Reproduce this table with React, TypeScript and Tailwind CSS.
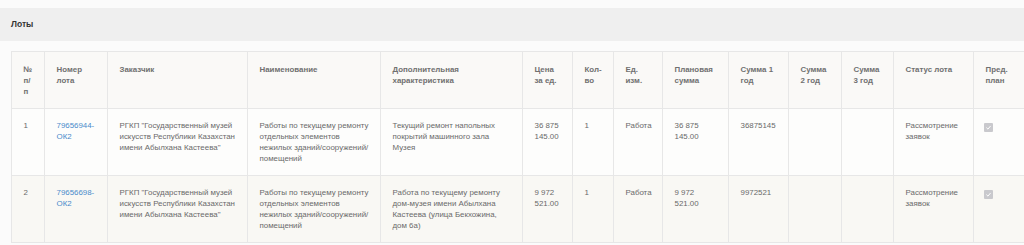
import React from "react";

const cols = [33, 63, 140, 133, 142, 50, 41, 49, 66, 60, 53, 52, 80, 60];

const headers = [
  "№ п/ п",
  "Номер лота",
  "Заказчик",
  "Наименование",
  "Дополнительная характеристика",
  "Цена за ед.",
  "Кол-во",
  "Ед. изм.",
  "Плановая сумма",
  "Сумма 1 год",
  "Сумма 2 год",
  "Сумма 3 год",
  "Статус лота",
  "Пред. план",
];

const rows = [
  {
    n: "1",
    lot: "79656944-ОК2",
    customer: 'РГКП "Государственный музей искусств Республики Казахстан имени Абылхана Кастеева"',
    name: "Работы по текущему ремонту отдельных элементов нежилых зданий/сооружений/ помещений",
    extra: "Текущий ремонт напольных покрытий машинного зала Музея",
    price: "36 875 145.00",
    qty: "1",
    unit: "Работа",
    plan: "36 875 145.00",
    s1: "36875145",
    status: "Рассмотрение заявок",
  },
  {
    n: "2",
    lot: "79656698-ОК2",
    customer: 'РГКП "Государственный музей искусств Республики Казахстан имени Абылхана Кастеева"',
    name: "Работы по текущему ремонту отдельных элементов нежилых зданий/сооружений/ помещений",
    extra: "Работа по текущему ремонту дом-музея имени Абылхана Кастеева (улица Бекхожина, дом 6а)",
    price: "9 972 521.00",
    qty: "1",
    unit: "Работа",
    plan: "9 972 521.00",
    s1: "9972521",
    status: "Рассмотрение заявок",
  },
];

function Check() {
  return (
    <div className="mt-[3px] -ml-[2px] w-[9px] h-[9px] rounded-[1px] bg-[#c9c9cd] flex items-center justify-center">
      <svg width="7" height="7" viewBox="0 0 10 10">
        <path d="M2 5.2 L4.2 7.3 L8 2.8" fill="none" stroke="#ffffff" strokeWidth="1.4" />
      </svg>
    </div>
  );
}

const td = "border border-[#e7e7e7] align-top px-[11.5px] pt-[11px] pb-[11px] leading-[11px]";

export default function App() {
  return (
    <div
      className="w-[1024px] h-[245px] overflow-hidden bg-[#fbfbfb] text-[7.9px] text-[#6a6a6a]"
      style={{ fontFamily: '"Liberation Sans", Arial, sans-serif' }}
    >
      <div className="h-[8px] bg-[#fbfbfb]" />
      <div className="h-[33px] bg-[#efefef] flex items-center px-[11px]">
        <span className="font-bold text-[#333333] text-[8.5px]">Лоты</span>
      </div>
      <div className="px-[11px] pt-[10px]">
        <table className="table-fixed border-collapse" style={{ width: cols.reduce((a, b) => a + b, 0) }}>
          <colgroup>
            {cols.map((w, i) => (
              <col key={i} style={{ width: w }} />
            ))}
          </colgroup>
          <thead>
            <tr className="bg-[#faf9f7]">
              {headers.map((h, i) => (
                <th key={i} className={`${td} text-left font-bold text-[#707070] pt-[12px] pb-[10px]`}>
                  {h}
                </th>
              ))}
            </tr>
          </thead>
          <tbody>
            {rows.map((r, i) => (
              <tr key={i} className={i % 2 === 0 ? "bg-[#fdfdfc]" : "bg-[#f9f8f4]"}>
                <td className={td}>{r.n}</td>
                <td className={td}>
                  <span className="text-[#4a8ccb]">{r.lot}</span>
                </td>
                <td className={td}>{r.customer}</td>
                <td className={td}>{r.name}</td>
                <td className={td}>{r.extra}</td>
                <td className={td}>{r.price}</td>
                <td className={td}>{r.qty}</td>
                <td className={td}>{r.unit}</td>
                <td className={td}>{r.plan}</td>
                <td className={td}>{r.s1}</td>
                <td className={td}></td>
                <td className={td}></td>
                <td className={td}>{r.status}</td>
                <td className={td}>
                  <Check />
                </td>
              </tr>
            ))}
          </tbody>
        </table>
      </div>
    </div>
  );
}
